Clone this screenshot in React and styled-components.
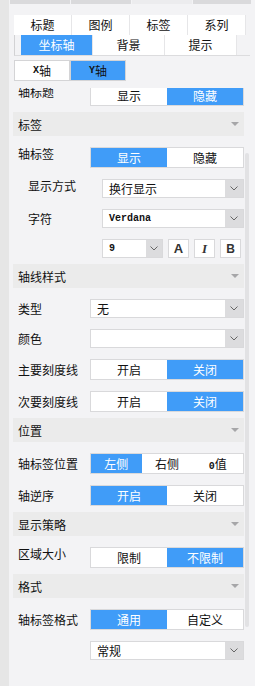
import React, { useLayoutEffect, useRef } from 'react'
import styled, { createGlobalStyle } from 'styled-components'

const BLUE = '#409cf8'
const LINE = '#d9d9db'

const GlobalStyle = createGlobalStyle`
  html, body {
    margin: 0;
    padding: 0;
  }
  body {
    background: #f3f3f5;
    font-family: 'Noto Sans CJK SC', 'Noto Sans', sans-serif;
    font-size: 12px;
    color: #111;
  }
  * {
    box-sizing: border-box;
  }
`

const Page = styled.div`
  display: flex;
  width: 255px;
  height: 686px;
  overflow: hidden;
  background: #f3f3f5;
`

const SideStrip = styled.div`
  flex: none;
  width: 9px;
  background: #e6e6e6;
`

const Main = styled.div`
  flex: 1;
  display: flex;
  flex-direction: column;
  min-width: 0;
`

const TopBars = styled.div`
  display: flex;
  gap: 1px;
  height: 4px;
  padding-left: 1px;
`

const TopBar = styled.div`
  width: ${(p) => p.$w}px;
  background: ${(p) => (p.$light ? '#ececee' : '#dadadc')};
`

const TabRow = styled.div`
  display: flex;
  margin-top: 11px;
  margin-left: 5px;
`

const TabRowWrap = styled.div`
  display: flex;
  width: 236px;
  margin-left: 5px;
  padding-left: 6px;
  border-left: 1px solid #d2d2d4;
  border-bottom: 1px solid #dcdcde;
`

const Tab = styled.div`
  width: ${(p) => p.$w}px;
  height: 20px;
  display: flex;
  align-items: center;
  justify-content: center;
  border-right: 1px solid #e6e6e8;
  background: ${(p) => (p.$active ? BLUE : '#fff')};
  color: ${(p) => (p.$active ? '#fff' : '#111')};
  line-height: 1;
`

const AxisSwitch = styled.div`
  display: flex;
  margin-top: 4px;
  margin-left: 5px;
`

const AxisButton = styled.div`
  width: 56px;
  height: 21px;
  display: flex;
  align-items: center;
  justify-content: center;
  border: 1px solid #d4d4d6;
  background: ${(p) => (p.$active ? BLUE : '#fff')};
  color: #111;
`

const Mono = styled.span`
  font-family: 'Liberation Mono', monospace;
  font-size: 10px;
  font-weight: 600;
`

const Panel = styled.div`
  position: relative;
  flex: 1;
  margin-top: 7px;
  min-height: 0;
`

const Scroller = styled.div`
  height: 100%;
  overflow: hidden;
  padding-left: 4px;
  width: 235px;
`

const Thumb = styled.div`
  position: absolute;
  left: 236px;
  top: 65px;
  width: 4px;
  height: 474px;
  border-radius: 2px;
  background: #e2e2e4;
`

const Body = styled.div`
  display: flex;
  flex-direction: column;
  gap: 11px;
  padding: 11px 0 6px;
`

const Header = styled.div`
  height: 24px;
  display: flex;
  align-items: center;
  justify-content: space-between;
  padding: 0 5px 0 5px;
  background: #ebebeb;
  width: 231px;
`

const Caret = styled.span`
  width: 0;
  height: 0;
  border-left: 4px solid transparent;
  border-right: 4px solid transparent;
  border-top: 4px solid #a6a6a8;
`

const Row = styled.div`
  display: flex;
  align-items: center;
`

const Label = styled.div`
  flex: none;
  width: ${(p) => (p.$indent ? 89 : 77)}px;
  padding-left: ${(p) => (p.$indent ? 15 : 5)}px;
  line-height: 14px;
  align-self: ${(p) => (p.$top ? 'flex-start' : 'center')};
  color: #111;
  white-space: nowrap;
`

const Toggle = styled.div`
  display: flex;
  width: 154px;
  height: 21px;
  border: 1px solid ${LINE};
  background: #fff;
`

const Option = styled.div`
  flex: 1;
  display: flex;
  align-items: center;
  justify-content: center;
  background: ${(p) => (p.$active ? BLUE : '#fff')};
  color: ${(p) => (p.$active ? '#fff' : '#111')};
`

const SelectBox = styled.div`
  display: flex;
  width: ${(p) => p.$w}px;
  height: 19px;
  border: 1px solid ${LINE};
  background: #fff;
`

const SelectValue = styled.div`
  flex: 1;
  display: flex;
  align-items: center;
  padding-left: 6px;
  color: #111;
`

const ArrowBox = styled.div`
  flex: none;
  width: ${(p) => p.$w || 18}px;
  display: flex;
  align-items: center;
  justify-content: center;
  background: #dcdcde;
`

const FontRow = styled.div`
  display: flex;
  gap: 5px;
  padding-left: 89px;
`

const StyleButton = styled.div`
  width: 21px;
  height: 19px;
  display: flex;
  align-items: center;
  justify-content: center;
  border: 1px solid ${LINE};
  background: #fff;
  color: #333;
  font-family: ${(p) => (p.$serif ? "'Liberation Serif', serif" : "'Liberation Sans', sans-serif")};
  font-style: ${(p) => (p.$italic ? 'italic' : 'normal')};
  font-weight: 700;
  font-size: ${(p) => p.$size || 12}px;
`

const Chevron = () => (
  <svg width="8" height="5" viewBox="0 0 8 5">
    <polyline points="0.5,0.5 4,4 7.5,0.5" fill="none" stroke="#666" strokeWidth="1" />
  </svg>
)

const Select = ({ width = 154, arrow, children }) => (
  <SelectBox $w={width}>
    <SelectValue>{children}</SelectValue>
    <ArrowBox $w={arrow}>
      <Chevron />
    </ArrowBox>
  </SelectBox>
)

const Switch = ({ options, active }) => (
  <Toggle>
    {options.map((o, i) => (
      <Option key={i} $active={i === active}>
        {o}
      </Option>
    ))}
  </Toggle>
)

const Section = ({ title }) => (
  <Header>
    <span>{title}</span>
    <Caret />
  </Header>
)

const App = () => {
  const scrollRef = useRef(null)

  // the panel is shown scrolled a little, the first row is half hidden
  useLayoutEffect(() => {
    if (scrollRef.current) scrollRef.current.scrollTop = 14
  }, [])

  return (
    <>
      <GlobalStyle />
      <Page>
        <SideStrip />
        <Main>
          <TopBars>
            <TopBar $w={60} />
            <TopBar $w={60} />
            <TopBar $w={60} $light />
            <TopBar $w={58} />
          </TopBars>

          <TabRow>
            <Tab $w={58}>标题</Tab>
            <Tab $w={58}>图例</Tab>
            <Tab $w={58}>标签</Tab>
            <Tab $w={58}>系列</Tab>
          </TabRow>
          <TabRowWrap>
            <Tab $w={72} $active>坐标轴</Tab>
            <Tab $w={72}>背景</Tab>
            <Tab $w={72}>提示</Tab>
          </TabRowWrap>

          <AxisSwitch>
            <AxisButton>
              <Mono>X</Mono>轴
            </AxisButton>
            <AxisButton $active>
              <Mono>Y</Mono>轴
            </AxisButton>
          </AxisSwitch>

          <Panel>
            <Scroller ref={scrollRef}>
              <Body>
                <Row>
                  <Label $top>轴标题</Label>
                  <Switch options={['显示', '隐藏']} active={1} />
                </Row>
              </Body>

              <Section title="标签" />
              <Body>
                <Row>
                  <Label $top>轴标签</Label>
                  <Switch options={['显示', '隐藏']} active={0} />
                </Row>
                <Row>
                  <Label $indent $top>显示方式</Label>
                  <Select width={142}>换行显示</Select>
                </Row>
                <Row>
                  <Label $indent>字符</Label>
                  <Select width={142}>
                    <Mono>Verdana</Mono>
                  </Select>
                </Row>
                <FontRow>
                  <Select width={61} arrow={16}>
                    <Mono>9</Mono>
                  </Select>
                  <StyleButton $size={13}>A</StyleButton>
                  <StyleButton $serif $italic $size={13}>I</StyleButton>
                  <StyleButton $size={12}>B</StyleButton>
                </FontRow>
              </Body>

              <Section title="轴线样式" />
              <Body>
                <Row>
                  <Label>类型</Label>
                  <Select>无</Select>
                </Row>
                <Row>
                  <Label>颜色</Label>
                  <Select />
                </Row>
                <Row>
                  <Label>主要刻度线</Label>
                  <Switch options={['开启', '关闭']} active={1} />
                </Row>
                <Row>
                  <Label>次要刻度线</Label>
                  <Switch options={['开启', '关闭']} active={1} />
                </Row>
              </Body>

              <Section title="位置" />
              <Body>
                <Row>
                  <Label>轴标签位置</Label>
                  <Switch
                    options={['左侧', '右侧', <span key="z"><Mono>0</Mono>值</span>]}
                    active={0}
                  />
                </Row>
                <Row>
                  <Label>轴逆序</Label>
                  <Switch options={['开启', '关闭']} active={0} />
                </Row>
              </Body>

              <Section title="显示策略" />
              <Body>
                <Row>
                  <Label $top>区域大小</Label>
                  <Switch options={['限制', '不限制']} active={1} />
                </Row>
              </Body>

              <Section title="格式" />
              <Body>
                <Row>
                  <Label>轴标签格式</Label>
                  <Switch options={['通用', '自定义']} active={0} />
                </Row>
                <Row>
                  <Label />
                  <Select>常规</Select>
                </Row>
              </Body>
              <Body />
              <Body />
            </Scroller>
            <Thumb />
          </Panel>
        </Main>
      </Page>
    </>
  )
}

export default App
